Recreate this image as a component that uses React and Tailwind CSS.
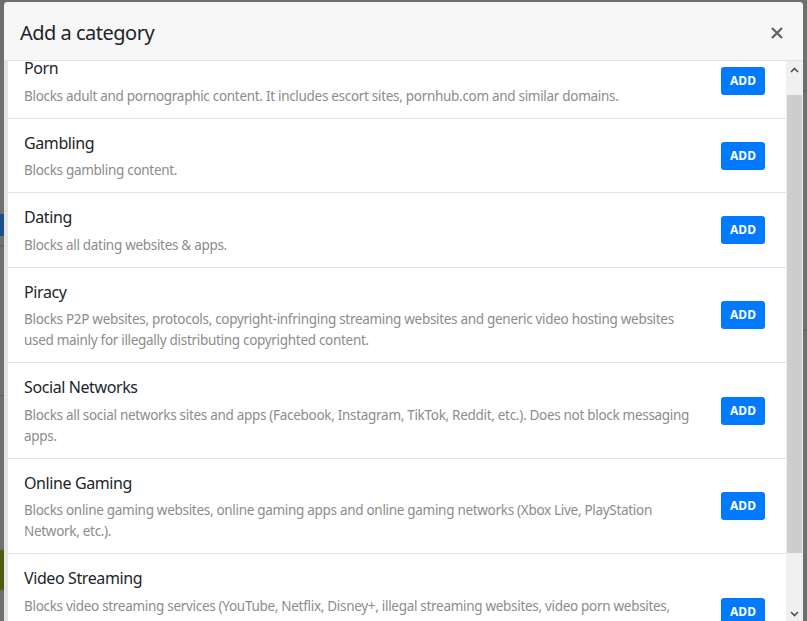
import React from "react";

const rows = [
  { t: "Porn", d: "Blocks adult and pornographic content. It includes escort sites, pornhub.com and similar domains." },
  { t: "Gambling", d: "Blocks gambling content." },
  { t: "Dating", d: "Blocks all dating websites & apps." },
  { t: "Piracy", d: "Blocks P2P websites, protocols, copyright-infringing streaming websites and generic video hosting websites used mainly for illegally distributing copyrighted content." },
  { t: "Social Networks", d: "Blocks all social networks sites and apps (Facebook, Instagram, TikTok, Reddit, etc.). Does not block messaging apps." },
  { t: "Online Gaming", d: "Blocks online gaming websites, online gaming apps and online gaming networks (Xbox Live, PlayStation Network, etc.)." },
  { t: "Video Streaming", d: "Blocks video streaming services (YouTube, Netflix, Disney+, illegal streaming websites, video porn websites, etc.) and their associated apps, including smart TV apps and streaming devices that are used to watch video content online." },
];

export default function App() {
  return (
    <div
      className="relative w-[807px] h-[621px] overflow-hidden bg-[#6f6f6f]"
      style={{ fontFamily: '"Noto Sans", "Open Sans", sans-serif' }}
    >
      {/* faint background page bits */}
      <div className="absolute left-0 top-[214px] w-[4px] h-[22px] bg-[#1d4e86]" />
      <div className="absolute left-0 top-[550px] w-[4px] h-[40px] bg-[#4f5a12]" />
      <div className="absolute left-0 top-[245px] w-[4px] h-px bg-[#5e5e5e]" />
      <div className="absolute left-0 top-[395px] w-[4px] h-px bg-[#5e5e5e]" />
      <div className="absolute right-0 top-[90px] w-[5px] h-px bg-[#5e5e5e]" />
      <div className="absolute right-0 top-[330px] w-[5px] h-px bg-[#5e5e5e]" />

      <div className="absolute left-[4px] top-[2px] w-[799px] h-[620px] flex flex-col rounded-t-[4px] overflow-hidden bg-white">
        <div className="h-[59px] shrink-0 bg-[#f7f7f7] border-b border-[#e2e2e2] flex items-center justify-between pl-[16px] pr-[19px] pt-[3px]">
          <div className="text-[20px] text-[#212529] leading-[30px] tracking-[-0.5px]">Add a category</div>
          <svg width="14" height="14" viewBox="0 0 14 14">
            <path d="M2 2 L12 12 M12 2 L2 12" stroke="#666" strokeWidth="2.4" strokeLinecap="butt" />
          </svg>
        </div>
        <div className="flex flex-1 min-h-0">
          <div className="w-[4px] bg-[#e4e4e4] shrink-0" />
          <div className="flex-1 min-w-0 overflow-hidden">
            <div className="-mt-[17px]">
              {rows.map((r, i) => (
                <div
                  key={r.t}
                  className={
                    "flex items-center pl-[16px] pr-[21px] pt-[12px] pb-[11px] " +
                    (i > 0 ? "border-t border-[#e2e2e2]" : "")
                  }
                >
                  <div className="flex-1 min-w-0 pr-[28px]">
                    <div className="text-[16px] leading-[24px] text-[#212529] tracking-[-0.4px]">{r.t}</div>
                    <div className="mt-[5.5px] text-[13.5px] leading-[21px] text-[#8c8c8c] tracking-[-0.3px]">{r.d}</div>
                  </div>
                  <button className="shrink-0 w-[44px] h-[28px] rounded-[3px] bg-[#007bff] text-white text-[12px] font-bold">
                    ADD
                  </button>
                </div>
              ))}
            </div>
          </div>
          <div className="w-[17px] shrink-0 bg-[#f0f0f0] flex flex-col">
            <div className="h-[17px] flex items-center justify-center">
              <svg width="9" height="6" viewBox="0 0 9 6">
                <path d="M1 5 L4.5 1.5 L8 5" stroke="#505050" strokeWidth="1.6" fill="none" />
              </svg>
            </div>
            <div className="mt-[17px] h-[458px] mx-[1px] bg-[#cdcdcd]" />
            <div className="flex-1" />
            <div className="h-[17px] flex items-center justify-center">
              <svg width="9" height="6" viewBox="0 0 9 6">
                <path d="M1 1 L4.5 4.5 L8 1" stroke="#505050" strokeWidth="1.6" fill="none" />
              </svg>
            </div>
          </div>
        </div>
      </div>
    </div>
  );
}
